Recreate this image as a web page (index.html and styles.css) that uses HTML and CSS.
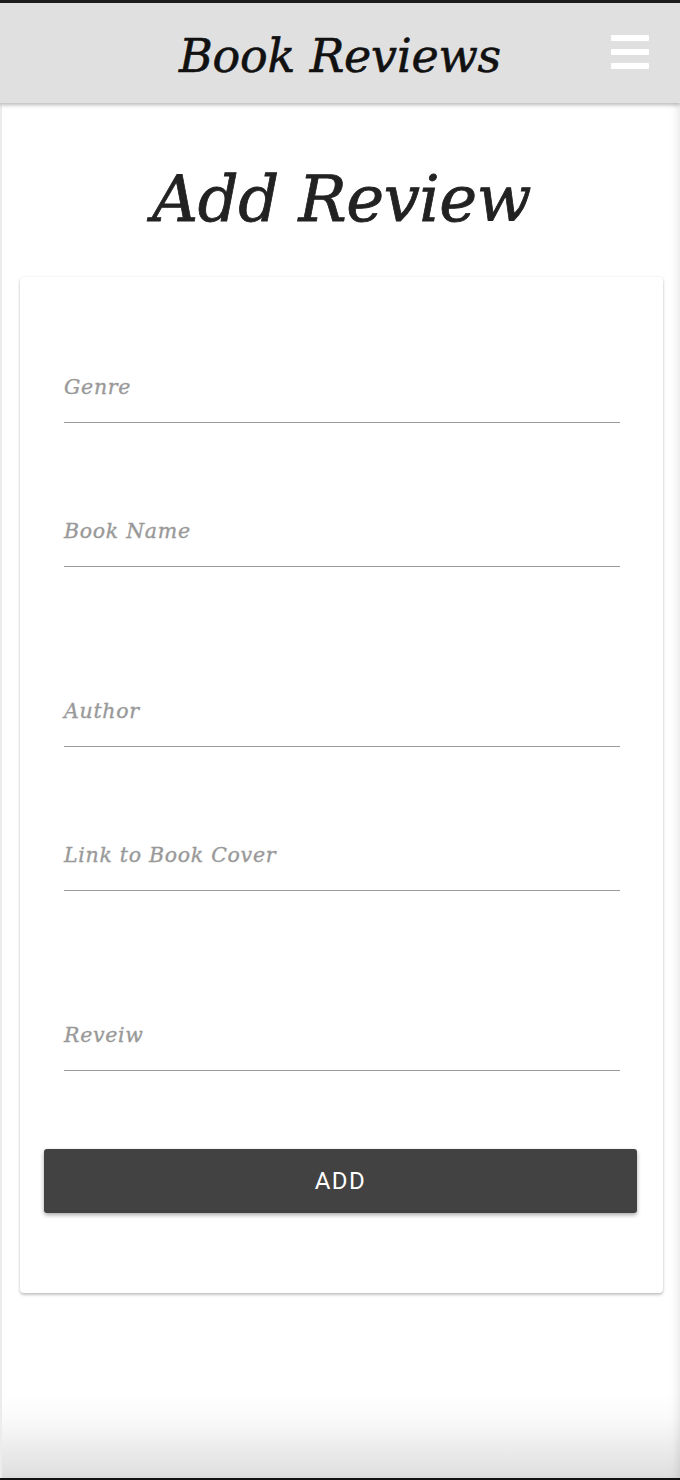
FILE: index.html
```html
<!DOCTYPE html>
<html lang="en">
<head>
<meta charset="utf-8">
<title>Book Reviews - Add Review</title>
<link rel="stylesheet" href="styles.css">
</head>
<body>
<div class="frame">
  <header class="topbar">
    <div class="spacer"></div>
    <h1 class="brand">Book Reviews</h1>
    <div class="menu-wrap">
      <button class="menu" aria-label="Menu">
        <span></span><span></span><span></span>
      </button>
    </div>
  </header>

  <main class="content">
    <h2 class="page-title">Add Review</h2>

    <form class="card">
      <div class="group">
        <label class="field"><span class="label">Genre</span></label>
        <label class="field"><span class="label">Book Name</span></label>
      </div>
      <div class="group">
        <label class="field"><span class="label">Author</span></label>
        <label class="field"><span class="label">Link to Book Cover</span></label>
      </div>
      <div class="group">
        <label class="field"><span class="label">Reveiw</span></label>
      </div>
      <button type="button" class="add-btn">ADD</button>
    </form>
  </main>
</div>
</body>
</html>
```

FILE: styles.css
```css
* { box-sizing: border-box; }

html, body {
  margin: 0;
  padding: 0;
  background: #fff;
}

.frame {
  width: 680px;
  height: 1480px;
  border-top: 3px solid #1c1c1c;
  border-bottom: 2px solid #111;
  background: linear-gradient(to bottom, #ffffff 0, #ffffff 1390px, #fafafa 1415px, #dedede 100%);
  box-shadow: inset 2px 0 0 #ececec, inset -6px 0 8px -4px rgba(0,0,0,0.10);
  overflow: hidden;
}

.topbar {
  height: 100px;
  background: #e0e0e0;
  display: grid;
  grid-template-columns: 1fr auto 1fr;
  align-items: center;
  box-shadow: 0 2px 4px rgba(0,0,0,0.28);
  position: relative;
  z-index: 1;
}

.brand {
  margin: 0;
  font-family: "DejaVu Serif", serif;
  font-style: italic;
  font-weight: normal;
  font-size: 46px;
  color: #111;
  letter-spacing: -0.2px;
  padding-top: 6px;
  -webkit-text-stroke: 0.6px #111;
}

.menu-wrap {
  display: flex;
  justify-content: flex-end;
  padding-right: 31px;
}

.menu {
  border: 0;
  background: transparent;
  padding: 0;
  width: 38px;
  height: 34px;
  display: flex;
  flex-direction: column;
  justify-content: space-between;
  margin-top: -2px;
}

.menu span {
  display: block;
  height: 6px;
  background: #fff;
  border-radius: 1px;
}

.content {
  padding: 0 17px 0 20px;
}

.page-title {
  margin: 46px 0 0;
  text-align: center;
  font-family: "DejaVu Serif", serif;
  font-style: italic;
  font-weight: normal;
  font-size: 64px;
  line-height: 100px;
  color: #222;
  letter-spacing: -0.5px;
  -webkit-text-stroke: 0.8px #222;
}

.card {
  margin-top: 28px;
  background: #fff;
  border-radius: 4px;
  box-shadow: 0 2px 3px rgba(0,0,0,0.22), 0 0 3px rgba(0,0,0,0.08);
  padding: 99px 26px 80px 24px;
  display: flex;
  flex-direction: column;
  gap: 133px;
}

.group {
  display: flex;
  flex-direction: column;
  gap: 97px;
  padding: 0 17px 0 20px;
}

.field {
  display: block;
  height: 47px;
  border-bottom: 1px solid #9a9a9a;
  padding-bottom: 25px;
}

.label {
  display: block;
  font-family: "DejaVu Serif", serif;
  font-style: italic;
  font-size: 20.5px;
  line-height: 22px;
  color: #999;
  letter-spacing: 0.7px;
  -webkit-text-stroke: 0.35px #999;
}

.add-btn {
  margin-top: -55px;
  height: 64px;
  width: 100%;
  border: 0;
  border-radius: 3px;
  background: #424242;
  color: #fff;
  font-family: Roboto, "Liberation Sans", sans-serif;
  font-size: 24px;
  letter-spacing: 1.5px;
  box-shadow: 0 2px 4px rgba(0,0,0,0.35);
}
```
